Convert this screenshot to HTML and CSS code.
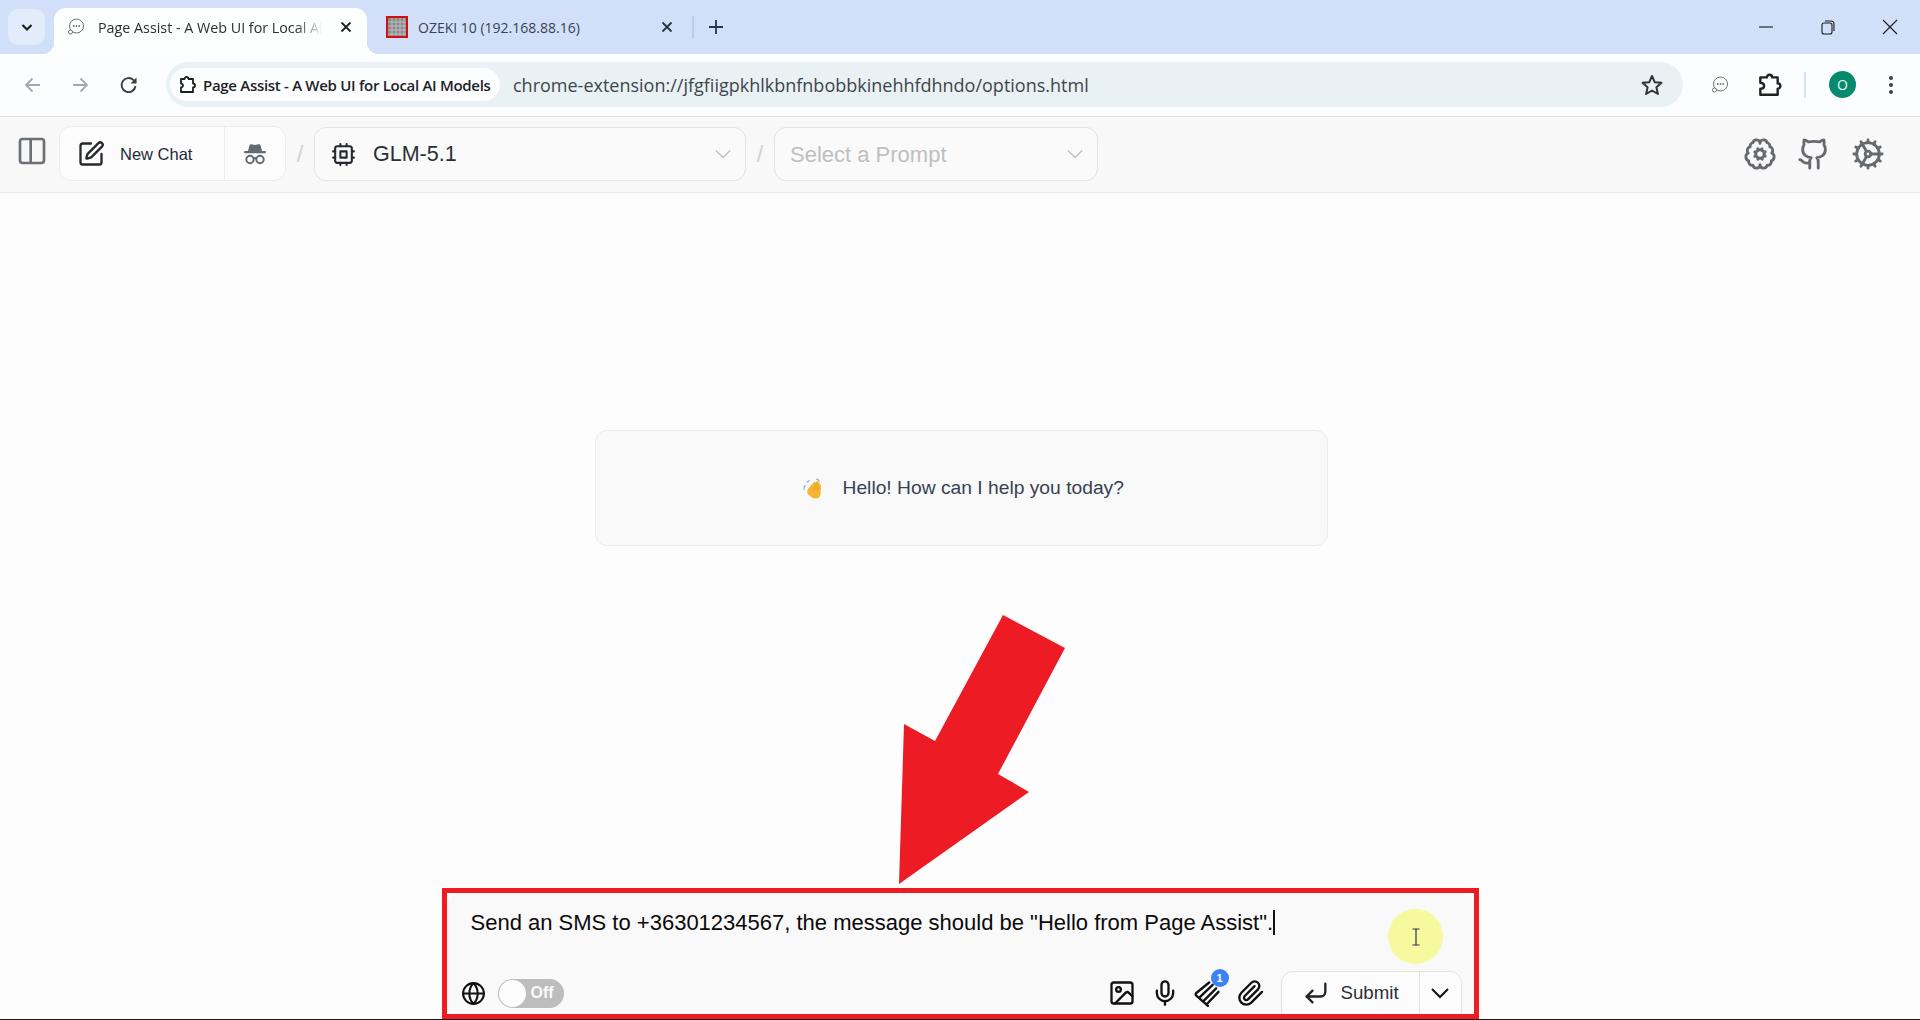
FILE: index.html
```html
<!DOCTYPE html>
<html lang="en">
<head>
<meta charset="utf-8">
<title>Page Assist</title>
<link rel="stylesheet" href="styles.css">
</head>
<body>
<div class="page">
  <div class="tabstrip">
    <div class="tab-search"><svg class="i16" viewBox="0 0 16 16"><path d="M3.5 6l4.5 4.5L12.500 6" fill="none" stroke="#1f1f1f" stroke-width="2.200"/></svg></div>
    <div class="tab active">
      <svg class="fav" viewBox="0 0 18 18"><circle cx="9.500" cy="8" r="7" fill="none" stroke="#6d6f73" stroke-width="1"/><circle cx="6.800" cy="8" r=".9" fill="#6d6f73"/><circle cx="9.500" cy="8" r=".9" fill="#6d6f73"/><circle cx="12.200" cy="8" r=".9" fill="#6d6f73"/><circle cx="3.500" cy="14" r="2" fill="#fff" stroke="#6d6f73"/></svg>
      <span class="tab-title fade">Page Assist - A Web UI for Local AI Models</span>
      <svg class="tab-x" viewBox="0 0 12 12"><path d="M1.500 1.500l9 9M10.500 1.500l-9 9" stroke="#1f1f1f" stroke-width="1.800"/></svg>
    </div>
    <div class="tab other">
      <svg class="fav-oz" viewBox="0 0 22 22"><rect x="1" y="1" width="20" height="20" fill="#8a8a8a" stroke="#d40f14" stroke-width="2"/><path d="M6 2v18M10 2v18M14 2v18M18 2v18M2 6h18M2 10h18M2 14h18M2 18h18" stroke="#c9c9c9" stroke-width=".8"/></svg>
      <span class="tab-title">OZEKI 10 (192.168.88.16)</span>
      <svg class="tab-x" viewBox="0 0 12 12"><path d="M1.500 1.500l9 9M10.500 1.500l-9 9" stroke="#2a3344" stroke-width="1.800"/></svg>
    </div>
    <span class="tab-sep"></span>
    <svg class="tab-plus" viewBox="0 0 14 14"><path d="M7 0v14M0 7h14" stroke="#2a3344" stroke-width="1.800"/></svg>
    <div class="win">
      <svg class="win-b" viewBox="0 0 16 16"><path d="M1 8h14" stroke="#1a1a1a" stroke-width="1.100"/></svg>
      <svg class="win-b" viewBox="0 0 16 16"><rect x="2" y="4" width="10" height="11" rx="2" fill="none" stroke="#1a1a1a" stroke-width="1.100"/><path d="M5 2h6a3 3 0 0 1 3 3v7" fill="none" stroke="#1a1a1a" stroke-width="1.100"/></svg>
      <svg class="win-b" viewBox="0 0 16 16"><path d="M1 1l14 14M15 1L1 15" stroke="#1a1a1a" stroke-width="1.100"/></svg>
    </div>
  </div>

  <div class="toolbar">
    <div class="nav-b"><svg class="i20" viewBox="0 0 20 20"><path d="M17 10H3.500M9.500 3.500L3 10l6.500 6.500" fill="none" stroke="#a4a9ad" stroke-width="1.800"/></svg></div>
    <div class="nav-b"><svg class="i20" viewBox="0 0 20 20"><path d="M3 10h13.500M10.500 3.500L17 10l-6.500 6.500" fill="none" stroke="#a4a9ad" stroke-width="1.800"/></svg></div>
    <div class="nav-b reload"><svg class="i20" viewBox="0 0 20 20"><path d="M16.500 11a7 7 0 1 1-1.900-5.800L17 7.500" fill="none" stroke="#3c4043" stroke-width="1.900"/><path d="M17.500 2.500v6h-6z" fill="#3c4043"/></svg></div>
    <div class="omni">
      <div class="chip">
        <svg class="ext" viewBox="0 0 20 20"><path d="M4 4h3.500a2 2 0 0 1 4 0H16v4.500a2 2 0 0 1 0 4V17H4v-4.500a2 2 0 0 0 0-4z" fill="none" stroke="#1f1f1f" stroke-width="1.800" stroke-linejoin="round"/></svg>
        <span class="chip-text">Page Assist - A Web UI for Local AI Models</span>
      </div>
      <span class="url">chrome-extension://jfgfiigpkhlkbnfnbobbkinehhfdhndo/options.html</span>
      <svg class="star" viewBox="0 0 24 24"><path d="M12 3l2.700 6.200 6.800.6-5.100 4.500 1.500 6.700-5.900-3.500L6.100 21l1.500-6.700-5.100-4.500 6.800-.6z" fill="none" stroke="#2f3336" stroke-width="2" stroke-linejoin="round"/></svg>
    </div>
    <div class="tool-right">
      <svg class="t-chat" viewBox="0 0 18 18"><circle cx="9.500" cy="8" r="7" fill="none" stroke="#6d6f73" stroke-width="1"/><circle cx="6.800" cy="8" r=".9" fill="#6d6f73"/><circle cx="9.500" cy="8" r=".9" fill="#6d6f73"/><circle cx="12.200" cy="8" r=".9" fill="#6d6f73"/><circle cx="3.500" cy="14" r="2" fill="#fff" stroke="#6d6f73"/></svg>
      <svg class="t-ext" viewBox="0 0 24 24"><path d="M4 5h6a2.500 2.500 0 0 1 5 0h5v5.500a2.500 2.500 0 0 1 0 5V21H4v-5.500c2.500 0 3.500-1.200 3.500-2.800S6.500 10 4 10z" fill="none" stroke="#202124" stroke-width="2.200" stroke-linejoin="round"/></svg>
      <span class="t-sep"></span>
      <span class="avatar">O</span>
      <svg class="t-dots" viewBox="0 0 6 20"><circle cx="3" cy="3" r="2" fill="#3c4043"/><circle cx="3" cy="10" r="2" fill="#3c4043"/><circle cx="3" cy="17" r="2" fill="#3c4043"/></svg>
    </div>
  </div>

  <header class="apphead">
    <svg class="side-ic" viewBox="0 0 24 24"><rect x="3" y="3" width="18" height="18" rx="2"/><path d="M11 3v18"/></svg>
    <div class="newchat">
      <div class="nc-main">
        <svg class="nc-ic" viewBox="0 0 24 24"><path d="M12 3H5a2 2 0 0 0-2 2v14a2 2 0 0 0 2 2h14a2 2 0 0 0 2-2v-7"/><path d="M18.375 2.625a1 1 0 0 1 3 3l-9.013 9.014a2 2 0 0 1-.853.505l-2.873.84a.5.5 0 0 1-.62-.62l.84-2.873a2 2 0 0 1 .506-.852z"/></svg>
        <span class="nc-text">New Chat</span>
      </div>
      <div class="nc-inc">
        <svg class="inc-ic" viewBox="0 0 24 22"><path d="M6.500 2.200Q7 1 8.500 1.300L12 2l3.500-.7Q17 1 17.500 2.200L19 8H5z" fill="#666a6e"/><rect x="1" y="8" width="22" height="2.200" rx="1.100" fill="#666a6e"/><circle cx="7" cy="16.500" r="3.700" fill="none" stroke="#666a6e" stroke-width="2"/><circle cx="17" cy="16.500" r="3.700" fill="none" stroke="#666a6e" stroke-width="2"/><path d="M10.500 15.500q1.500-1 3 0" fill="none" stroke="#666a6e" stroke-width="2"/></svg>
      </div>
    </div>
    <span class="slash">/</span>
    <div class="select model">
      <svg class="cpu" viewBox="0 0 24 24"><rect x="4" y="4" width="16" height="16" rx="2"/><rect x="9" y="9" width="6" height="6"/><path d="M15 2v2M15 20v2M2 15h2M2 9h2M20 15h2M20 9h2M9 2v2M9 20v2"/></svg>
      <span class="model-name">GLM-5.1</span>
      <svg class="chev" viewBox="0 0 18 10"><path d="M2 1.500l7 7 7-7" fill="none" stroke="#bdbdbd" stroke-width="1.300"/></svg>
    </div>
    <span class="slash">/</span>
    <div class="select prompt">
      <span class="prompt-ph">Select a Prompt</span>
      <svg class="chev" viewBox="0 0 18 10"><path d="M2 1.500l7 7 7-7" fill="none" stroke="#bdbdbd" stroke-width="1.300"/></svg>
    </div>
    <div class="head-right">
      <svg class="h-ic" viewBox="0 0 24 24"><path d="M12 4.500a2.500 2.500 0 0 0-4.960-.46 2.500 2.500 0 0 0-1.980 3 2.500 2.500 0 0 0-1.320 4.240 3 3 0 0 0 .34 5.580 2.500 2.500 0 0 0 2.960 3.080A2.500 2.500 0 0 0 12 19.500a2.500 2.500 0 0 0 4.960.44 2.500 2.500 0 0 0 2.960-3.080 3 3 0 0 0 .34-5.580 2.500 2.500 0 0 0-1.320-4.240 2.500 2.500 0 0 0-1.980-3A2.500 2.500 0 0 0 12 4.500"/><path d="m15.700 10.400-.9.4M9.200 13.200l-.9.4M13.600 15.700l-.4-.9M10.800 9.200l-.4-.9M15.700 13.500l-.9-.4M9.200 10.900l-.9-.4M10.500 15.700l.4-.9M13.100 9.200l.4-.9"/><circle cx="12" cy="12" r="3"/></svg>
      <svg class="h-ic gh" viewBox="0 0 24 24"><path d="M15 22v-4a4.800 4.800 0 0 0-1-3.500c3 0 6-2 6-5.500.08-1.250-.27-2.480-1-3.500.28-1.150.28-2.350 0-3.500 0 0-1 0-3 1.500-2.640-.5-5.360-.5-8 0C6 2 5 2 5 2c-.3 1.150-.3 2.350 0 3.500A5.403 5.403 0 0 0 4 9c0 3.500 3 5.500 6 5.500-.39.49-.68 1.050-.85 1.650-.17.6-.22 1.230-.15 1.850v4"/><path d="M9 18c-4.510 2-5-2-7-2"/></svg>
      <svg class="h-ic cog" viewBox="0 0 24 24"><path d="M12 20a8 8 0 1 0 0-16 8 8 0 0 0 0 16Z"/><path d="M12 14a2 2 0 1 0 0-4 2 2 0 0 0 0 4Z"/><path d="M12 2v2M12 22v-2M17 20.660l-1-1.730M11 10.270 7 3.340M20.660 17l-1.730-1M3.340 7l1.730 1M14 12h8M2 12h2M20.660 7l-1.730 1M3.340 17l1.730-1M17 3.340l-1 1.730M11 13.730l-4 6.930"/></svg>
    </div>
  </header>

  <main class="main">
    <div class="hello">
      <svg class="wave" viewBox="0 0 20 22" role="img" aria-label="waving hand"><path d="M1 13Q.6 10 2.500 8M4 5.500Q5 4 6.500 3.500M13 2q2.500 0 3.500 2.500" fill="none" stroke="#6fa8dc" stroke-width="1.100"/><path d="M6 18.500c-2-2-2.300-4.700-1-6.500l6-7c.8-1 2 0 1.500 1.100l1.300-2c.8-.9 2-.2 1.700.9l-.3 1c.6-.9 1.900-.4 1.700.6l-.2 1.400c.6-.6 1.400-.2 1.300.6l-.5 9c-.3 2.400-2.400 4-4.800 4-2.600 0-4.700-1.400-6.700-3.600z" fill="#f6b632"/><path d="M10 12l4-5.500M12 13l3.500-5M14 14l2.500-4" stroke="#d98e1e" stroke-width=".7" fill="none"/></svg>
      <span class="hello-text">Hello! How can I help you today?</span>
    </div>
    <section class="composer">
      <div class="msg">Send an SMS to +36301234567, the message should be "Hello from Page Assist".<span class="caret"></span></div>
      <div class="comp-row">
        <svg class="c-ic globe" viewBox="0 0 24 24"><circle cx="12" cy="12" r="10"/><path d="M12 2a14.500 14.500 0 0 0 0 20 14.500 14.500 0 0 0 0-20"/><path d="M2 12h20"/></svg>
        <div class="toggle"><span class="knob"></span><span class="off">Off</span></div>
        <div class="comp-right">
          <svg class="c-ic" viewBox="0 0 24 24"><rect x="3" y="3" width="18" height="18" rx="2"/><circle cx="9" cy="9" r="2"/><path d="m21 15-3.086-3.086a2 2 0 0 0-2.828 0L6 21"/></svg>
          <svg class="c-ic" viewBox="0 0 24 24"><path d="M12 2a3 3 0 0 0-3 3v7a3 3 0 0 0 6 0V5a3 3 0 0 0-3-3Z"/><path d="M19 10v2a7 7 0 0 1-14 0v-2"/><path d="M12 19v3"/></svg>
          <div class="multi">
            <svg class="c-ic" viewBox="0 0 24 24"><path d="M13 3 2 12c-.8.7-.7 1.600 0 2.300L12 23"/><path d="M16 5 5 15.500M19 8 8.500 18.500M21 11 11.500 21"/></svg>
            <span class="badge">1</span>
          </div>
          <svg class="c-ic" viewBox="0 0 24 24"><path d="m21.440 11.050-9.190 9.190a6 6 0 0 1-8.490-8.490l8.570-8.570A4 4 0 1 1 18 8.840l-8.590 8.570a2 2 0 0 1-2.830-2.830l8.490-8.480"/></svg>
          <div class="submit">
            <div class="sub-main">
              <svg class="c-ic enter" viewBox="0 0 24 24"><path d="M9 10l-5 5 5 5"/><path d="M20 4v7a4 4 0 0 1-4 4H4"/></svg>
              <span class="sub-text">Submit</span>
            </div>
            <div class="sub-more"><svg class="sub-chev" viewBox="0 0 20 12"><path d="M2 2l8 8 8-8" fill="none" stroke="#111" stroke-width="2"/></svg></div>
          </div>
        </div>
      </div>
    </section>
  </main>
  <div class="edge"></div>

  <svg class="arrow" viewBox="0 0 180 290"><polygon points="104,5 166,38 99,164 130,182 0,274 5,114 36,131" fill="#ed1c24"/></svg>
  <div class="redbox"></div>
  <div class="cursor-spot"><svg class="ibeam" viewBox="0 0 10 18"><path d="M1.500 1h7M5 1v16M1.500 17h7" stroke="#2a3350" stroke-width="1.200" fill="none"/></svg></div>
</div>
</body>
</html>
```

FILE: styles.css
```css
* { box-sizing: border-box; }
html, body { margin: 0; padding: 0; }
body { font-family: "Liberation Sans", Arial, sans-serif; background: #fdfdfd; }
svg { display: block; flex: none; }
.page { position: relative; width: 1920px; height: 1020px; overflow: hidden; display: flex; flex-direction: column; }

/* tab strip */
.tabstrip { height: 54px; background: #d1e0f8; display: flex; align-items: flex-start; padding-left: 8px; font-family: "Open Sans", sans-serif; }
.tab-search { width: 37px; height: 36px; margin-top: 9px; border-radius: 10px; background: #e2ecfb; display: flex; align-items: center; justify-content: center; }
.i16 { width: 16px; height: 16px; }
.tab { height: 46px; margin-top: 8px; padding-bottom: 8px; display: flex; align-items: center; position: relative; }
.tab.active { width: 313px; margin-left: 9px; background: #fdfefe; border-radius: 12px 12px 0 0; padding-left: 13px; }
.tab.active::before, .tab.active::after { content: ""; position: absolute; bottom: 0; width: 12px; height: 12px; }
.tab.active::before { left: -12px; background: radial-gradient(circle at 0 0, transparent 12px, #fdfefe 12.500px); }
.tab.active::after { right: -12px; background: radial-gradient(circle at 100% 0, transparent 12px, #fdfefe 12.500px); }
.fav { width: 18px; height: 18px; }
.tab-title { font-size: 14px; color: #2b2f33; white-space: nowrap; margin-left: 13px; }
.tab-title.fade { width: 225px; font-size: 14.300px; overflow: hidden; -webkit-mask-image: linear-gradient(90deg, #000 88%, transparent); mask-image: linear-gradient(90deg, #000 88%, transparent); }
.tab-x { width: 12px; height: 12px; margin-left: 17px; }
.tab.other { margin-left: 19px; width: 295px; }
.fav-oz { width: 22px; height: 22px; }
.tab.other .tab-title { margin-left: 10px; color: #3a4250; width: 167px; }
.tab.other .tab-x { margin-left: 76px; }
.tab-sep { width: 2px; height: 22px; background: #b9cde9; margin: 16px 0 0 11px; }
.tab-plus { width: 14px; height: 14px; margin: 20px 0 0 15px; }
.win { margin-left: auto; display: flex; margin-top: 19px; margin-right: 22px; gap: 46px; }
.win-b { width: 16px; height: 16px; }

/* browser toolbar */
.toolbar { height: 63px; background: #fcfdfe; border-bottom: 1px solid #dfe1e3; display: flex; align-items: center; padding: 0 0 1px 9px; font-family: "Open Sans", sans-serif; }
.nav-b { width: 47px; height: 40px; display: flex; align-items: center; justify-content: center; }
.nav-b.reload { margin-left: 2px; }
.i20 { width: 20px; height: 20px; }
.omni { width: 1517px; height: 45px; margin-left: 14px; border-radius: 23px; background: #e9f1f4; display: flex; align-items: center; padding-left: 4px; }
.chip { width: 330px; height: 33px; background: #fcfdfe; border-radius: 17px; display: flex; align-items: center; padding-left: 7px; }
.ext { width: 20px; height: 20px; }
.chip-text { font-size: 15px; font-weight: 600; color: #1f2226; margin-left: 6px; letter-spacing: -0.3px; white-space: nowrap; }
.url { font-size: 18px; color: #3f464b; margin-left: 13px; white-space: nowrap; }
.star { width: 24px; height: 24px; margin-left: auto; margin-right: 19px; }
.tool-right { display: flex; align-items: center; flex: 1; padding-left: 28px; }
.t-chat { width: 18px; height: 18px; }
.t-ext { width: 26px; height: 26px; margin-left: 27px; }
.t-sep { width: 2px; height: 26px; background: #d4e2f5; margin-left: 22px; }
.avatar { width: 27px; height: 27px; margin-left: 23px; border-radius: 50%; background: #048a6d; color: #e8f6f2; font-size: 14px; display: flex; align-items: center; justify-content: center; }
.t-dots { width: 6px; height: 20px; margin-left: 32px; }

/* app header */
.apphead { height: 76px; background: #f8f8f8; border-bottom: 1px solid #e6e7e8; display: flex; align-items: center; padding: 0 35px 2px 16px; }
.side-ic { width: 32px; height: 32px; fill: none; stroke: #6b7075; stroke-width: 2; margin-top: -5px; }
.newchat { width: 227px; height: 55px; margin-left: 11px; background: #fcfcfc; border: 1px solid #ececec; border-radius: 12px; display: flex; }
.nc-main { width: 165px; border-right: 1px solid #ececec; display: flex; align-items: center; padding-left: 17px; }
.nc-ic { width: 28px; height: 28px; fill: none; stroke: #26292d; stroke-width: 2; stroke-linecap: round; stroke-linejoin: round; }
.nc-text { font-size: 16.500px; color: #1f2937; margin: 2px 0 0 15px; white-space: nowrap; }
.nc-inc { flex: 1; display: flex; align-items: center; justify-content: center; }
.inc-ic { width: 24px; height: 22px; }
.slash { width: 28px; text-align: center; font-size: 24px; color: #d2d3d4; }
.select { height: 54px; background: #fafafa; border: 1px solid #e2e2e2; border-radius: 12px; display: flex; align-items: center; }
.model { width: 432px; padding: 0 13px 0 16px; }
.prompt { width: 324px; padding: 0 13px 0 15px; }
.cpu { width: 25px; height: 25px; fill: none; stroke: #26292d; stroke-width: 2; stroke-linecap: round; stroke-linejoin: round; margin-top: 1px; }
.model-name { font-size: 21.500px; color: #2b2f33; margin: 2px 0 0 17px; }
.prompt-ph { font-size: 22px; color: #bfbfbf; margin-top: 2px; }
.chev { width: 18px; height: 10px; margin-left: auto; }
.head-right { margin-left: auto; display: flex; align-items: center; }
.h-ic { width: 34px; height: 34px; fill: none; stroke: #666a6e; stroke-width: 2; stroke-linecap: round; stroke-linejoin: round; }
.gh { margin-left: 20px; }
.cog { margin-left: 20px; }

/* main */
.main { flex: 1; min-height: 0; display: flex; flex-direction: column; align-items: center; padding: 237px 0 5px; background: #fdfdfd; }
.hello { width: 733px; height: 116px; margin-left: 2px; background: #f9f9f9; border: 1px solid #ececec; border-radius: 12px; display: flex; align-items: center; padding-left: 207px; }
.wave { width: 20px; height: 22px; margin-top: -1px; }
.hello-text { font-size: 19.250px; color: #374151; margin-left: 20px; white-space: nowrap; }
.composer { width: 1027px; height: 121px; margin-top: auto; background: #f9f9f9; border-radius: 12px 12px 0 0; overflow: hidden; }
.msg { height: 78px; padding: 15px 0 0 24px; font-size: 22px; line-height: 30px; color: #0a0a0a; white-space: nowrap; }
.caret { display: inline-block; width: 1.500px; height: 25px; background: #111; vertical-align: -5px; }
.comp-row { height: 44px; display: flex; align-items: center; padding: 0 12px 0 14px; }
.c-ic { width: 28px; height: 28px; fill: none; stroke: #111; stroke-width: 2; stroke-linecap: round; stroke-linejoin: round; }
.globe { width: 25px; height: 25px; }
.toggle { width: 66px; height: 29px; margin-left: 12px; border-radius: 15px; background: #bdbdbd; display: flex; align-items: center; padding-left: 1px; }
.knob { width: 27px; height: 27px; border-radius: 50%; background: #fdfdfd; }
.off { font-size: 16px; font-weight: 700; color: #fafafa; margin-left: 5px; }
.comp-right { margin-left: auto; display: flex; align-items: center; gap: 15px; }
.multi { position: relative; }
.badge { position: absolute; top: -10px; right: -7px; width: 18px; height: 18px; border-radius: 50%; background: #3b82f6; color: #fff; font-size: 11px; font-weight: 700; display: flex; align-items: center; justify-content: center; }
.submit { width: 181px; height: 52px; margin: 8px 0 0 1px; background: #fcfcfc; border: 1px solid #e2e2e2; border-radius: 12px; display: flex; }
.sub-main { width: 138px; height: 42px; border-right: 1px solid #e2e2e2; display: flex; align-items: center; padding-left: 20px; }
.enter { width: 28px; height: 28px; stroke: #222; }
.sub-text { font-size: 18.700px; color: #2b2f33; margin-left: 11px; }
.sub-more { flex: 1; height: 42px; display: flex; align-items: center; justify-content: center; }
.sub-chev { width: 20px; height: 12px; }
.edge { height: 1px; background: #161616; }

/* annotations over the screenshot */
.arrow { position: absolute; left: 899px; top: 610px; width: 180px; height: 290px; }
.redbox { position: absolute; left: 442px; top: 888px; width: 1037px; height: 131px; border: 5px solid #ed1c24; }
.cursor-spot { position: absolute; left: 1388px; top: 909px; width: 55px; height: 55px; border-radius: 50%; background: #f6f99e; display: flex; align-items: center; justify-content: center; }
.ibeam { width: 10px; height: 18px; }
```
